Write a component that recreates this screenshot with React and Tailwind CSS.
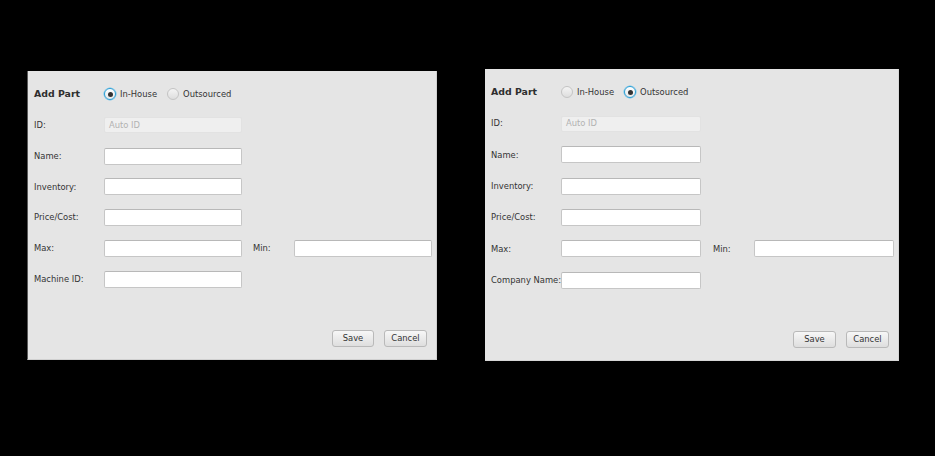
import React from 'react';

const txt = "font-['DejaVu_Sans',sans-serif] text-[8.4px] text-[#333333]";

function Radio({ on, label }) {
  return (
    <div className="flex items-center">
      {on ? (
        <span className="w-[12px] h-[12px] rounded-full border border-[#2a9fd6] bg-gradient-to-b from-[#ffffff] to-[#e8e8e8] shadow-[0_0_0_0.5px_#6cc1ea] flex items-center justify-center">
          <span className="w-[5px] h-[5px] rounded-full bg-[#333333]" />
        </span>
      ) : (
        <span className="w-[12px] h-[12px] rounded-full border border-[#c4c4c4] bg-gradient-to-b from-[#f4f4f4] to-[#dedede]" />
      )}
      <span className={`${txt} ml-[4px]`}>{label}</span>
    </div>
  );
}

function Field({ w, disabled }) {
  if (disabled) {
    return (
      <div className={`${w} h-[16px] rounded-[2px] border border-[#e2e2e2] bg-[#efefef] flex items-center pl-[4px]`}>
        <span className="font-['DejaVu_Sans',sans-serif] text-[8.4px] text-[#b2b2b2]">Auto ID</span>
      </div>
    );
  }
  return <div className={`${w} h-[17px] rounded-[2px] border border-[#c6c6c6] border-t-[#b8b8b8] bg-white`} />;
}

function Btn({ label, w }) {
  return (
    <div className={`${w} h-[17px] rounded-[3px] border border-[#b9b9b9] bg-gradient-to-b from-[#f7f7f7] to-[#dedede] flex items-center justify-center`}>
      <span className={txt}>{label}</span>
    </div>
  );
}

function PartForm({ outsourced, rowH, inputW, pad, minGap, box, saveW, cancelW }) {
  const rows = [
    ['ID:', true],
    ['Name:'],
    ['Inventory:'],
    ['Price/Cost:'],
  ];
  return (
    <div className={`${box} bg-[#e5e5e5] flex flex-col pt-[8px] ${pad}`}>
      <div className="flex items-center h-[31px]">
        <span className="w-[70px] shrink-0 font-['DejaVu_Sans',sans-serif] text-[9.4px] font-bold text-[#2e2e2e]">Add Part</span>
        <Radio on={!outsourced} label="In-House" />
        <div className="w-[10px]" />
        <Radio on={outsourced} label="Outsourced" />
      </div>
      {rows.map(([label, dis]) => (
        <div key={label} className={`flex items-center ${rowH}`}>
          <span className={`${txt} w-[70px] shrink-0`}>{label}</span>
          <Field w={inputW} disabled={dis} />
        </div>
      ))}
      <div className={`flex items-center ${rowH}`}>
        <span className={`${txt} w-[70px] shrink-0`}>Max:</span>
        <Field w={inputW} />
        <span className={`${txt} ${minGap} w-[41px] shrink-0`}>Min:</span>
        <Field w={inputW} />
      </div>
      <div className={`flex items-center ${rowH}`}>
        <span className={`${txt} w-[70px] shrink-0 whitespace-nowrap`}>
          {outsourced ? 'Company Name:' : 'Machine ID:'}
        </span>
        <Field w={inputW} />
      </div>
      <div className="mt-auto flex justify-end gap-[10px] pr-[9px] pb-[12px]">
        <Btn label="Save" w={saveW} />
        <Btn label="Cancel" w={cancelW} />
      </div>
    </div>
  );
}

export default function App() {
  return (
    <div className="w-[935px] h-[456px] bg-black flex items-start pl-[27px]">
      <div className="mt-[71px]">
        <PartForm
          outsourced={false}
          rowH="h-[30.8px]"
          inputW="w-[138px]"
          pad="pl-[6px] border-l border-l-[#5a5a5a] border-r border-b border-r-[#d0d0d0] border-b-[#d0d0d0]"
          minGap="ml-[11px]"
          box="w-[410px] h-[289px]"
          saveW="w-[42px]"
          cancelW="w-[43px]"
        />
      </div>
      <div className="mt-[69px] ml-[48px]">
        <PartForm
          outsourced={true}
          rowH="h-[31.3px]"
          inputW="w-[140px]"
          pad="pl-[6px] border-r border-b border-r-[#d6d6d6] border-b-[#d6d6d6]"
          minGap="ml-[12px]"
          box="w-[414px] h-[292px]"
          saveW="w-[43px]"
          cancelW="w-[43px]"
        />
      </div>
    </div>
  );
}
